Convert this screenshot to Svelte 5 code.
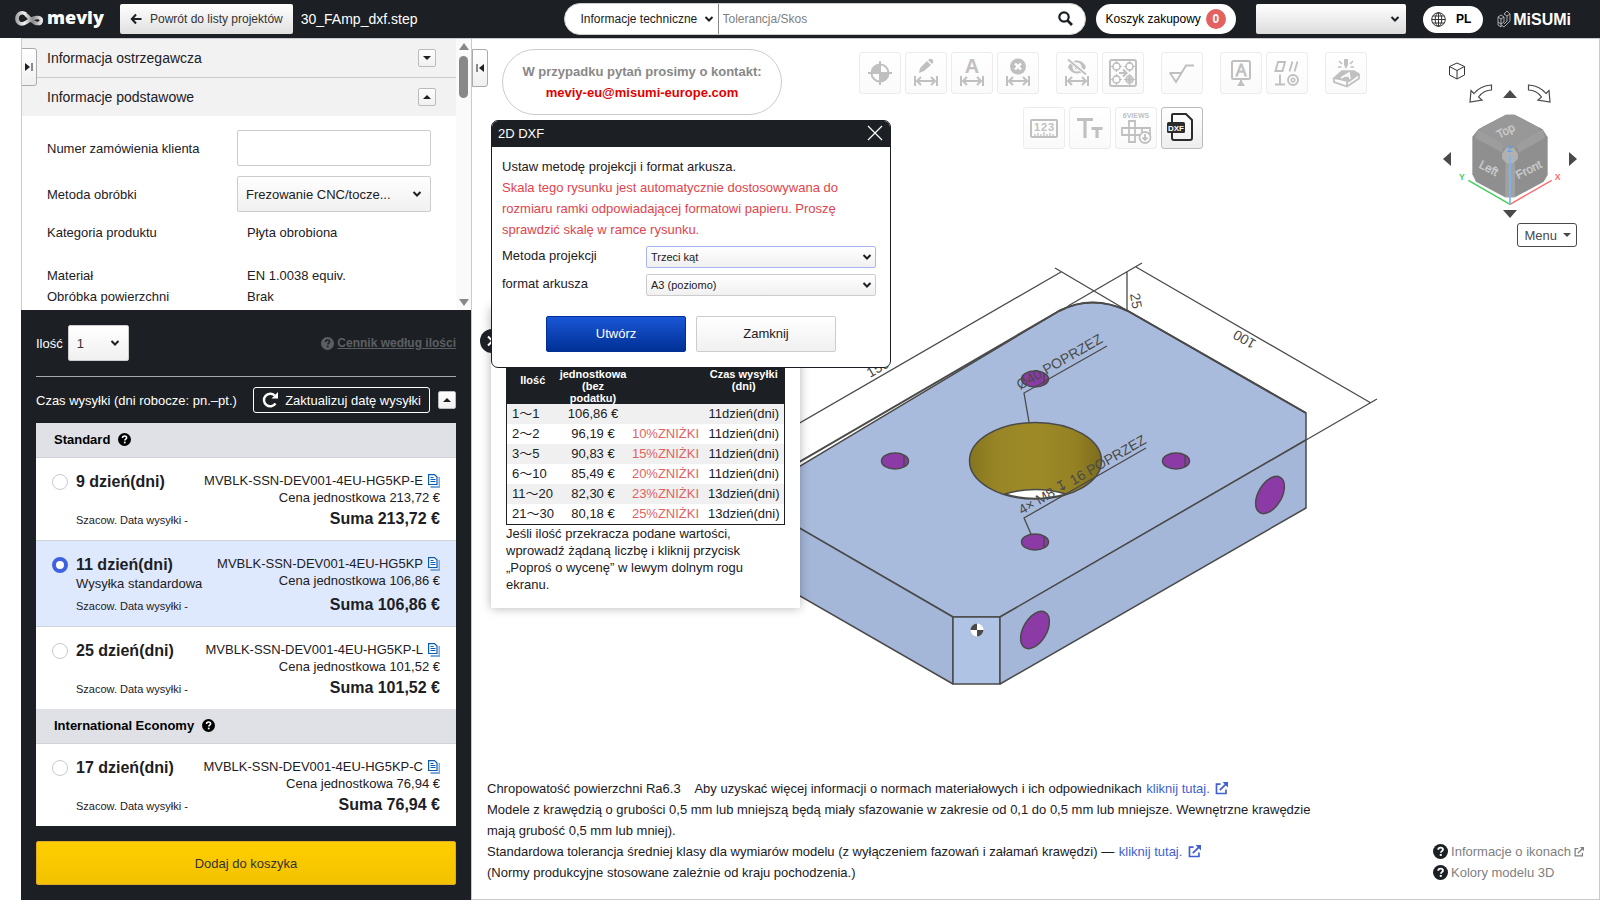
<script lang="ts">
  type Offer = {
    id: string;
    days: number;
    note?: string;
    code: string;
    unit: string;
    sum: string;
  };

  const groups: { name: string; offers: Offer[] }[] = [
    {
      name: 'Standard',
      offers: [
        { id: 'e', days: 9, code: 'MVBLK-SSN-DEV001-4EU-HG5KP-E', unit: '213,72', sum: '213,72' },
        { id: 's', days: 11, note: 'Wysyłka standardowa', code: 'MVBLK-SSN-DEV001-4EU-HG5KP', unit: '106,86', sum: '106,86' },
        { id: 'l', days: 25, code: 'MVBLK-SSN-DEV001-4EU-HG5KP-L', unit: '101,52', sum: '101,52' }
      ]
    },
    {
      name: 'International Economy',
      offers: [
        { id: 'c', days: 17, code: 'MVBLK-SSN-DEV001-4EU-HG5KP-C', unit: '76,94', sum: '76,94' }
      ]
    }
  ];

  const prices = [
    { range: '1〜1', price: '106,86 €', discount: '', days: '11dzień(dni)' },
    { range: '2〜2', price: '96,19 €', discount: '10%ZNIŻKI', days: '11dzień(dni)' },
    { range: '3〜5', price: '90,83 €', discount: '15%ZNIŻKI', days: '11dzień(dni)' },
    { range: '6〜10', price: '85,49 €', discount: '20%ZNIŻKI', days: '11dzień(dni)' },
    { range: '11〜20', price: '82,30 €', discount: '23%ZNIŻKI', days: '13dzień(dni)' },
    { range: '21〜30', price: '80,18 €', discount: '25%ZNIŻKI', days: '13dzień(dni)' }
  ];

  const toolGroups = [
    ['origin', 'dim-edit', 'dim-text', 'dim-delete'],
    ['dim-hide', 'holes'],
    ['roughness'],
    ['datum', 'tolerance'],
    ['engraving']
  ];

  const toolNames: Record<string, string> = {
    origin: 'Punkt bazowy',
    'dim-edit': 'Dodaj wymiar',
    'dim-text': 'Tekst wymiaru',
    'dim-delete': 'Usuń wymiar',
    'dim-hide': 'Ukryj wymiary',
    holes: 'Grupa otworów',
    roughness: 'Chropowatość',
    datum: 'Baza',
    tolerance: 'Tolerancje geometryczne',
    engraving: 'Grawerowanie',
    measure: 'Pomiar',
    font: 'Rozmiar tekstu',
    views: '6 widoków',
    dxf: '2D DXF'
  };

  let selected = 's';
  let dialogOpen = true;
  let orderNumber = '';
  let query = '';
</script>

{#snippet chevron()}
  <svg class="chevron" viewBox="0 0 10 10" width="10" height="10" aria-hidden="true">
    <path d="M1.500 3l3.500 3.500L8.500 3" fill="none" stroke="#1c2024" stroke-width="2" />
  </svg>
{/snippet}

{#snippet question(size: number, color: string, mark: string)}
  <svg viewBox="0 0 14 14" width={size} height={size} aria-hidden="true">
    <circle cx="7" cy="7" r="7" fill={color} />
    <path d="M4.900 5.400c0-1.300 1-2.100 2.200-2.100s2.200.8 2.200 1.900c0 1.400-2 1.500-2 3" fill="none" stroke={mark} stroke-width="1.700" />
    <rect x="6.300" y="9.300" width="1.900" height="1.800" fill={mark} />
  </svg>
{/snippet}

{#snippet external(size: number)}
  <svg viewBox="0 0 14 14" width={size} height={size} aria-hidden="true">
    <path d="M6 2.200H1.600v10.200h10.200V8" fill="none" stroke="currentColor" stroke-width="1.800" />
    <path d="M5.200 8.800L12 2" fill="none" stroke="currentColor" stroke-width="1.900" />
    <path d="M8.200 0H14v5.800z" fill="currentColor" />
  </svg>
{/snippet}

{#snippet dimension()}
  <path d="M10 24v10M32 24v10M12 29h18M16 25l-4 4 4 4M26 25l4 4-4 4" fill="none" stroke="currentColor" stroke-width="2" />
{/snippet}

{#snippet tool(name: string)}
  <button class="tool" class:active={name === 'dxf'} aria-label={toolNames[name]} on:click={() => name === 'dxf' && (dialogOpen = true)}>
    <svg viewBox="0 0 42 42" width="42" height="42" fill="none" stroke="none" stroke-width="2">
      {#if name === 'origin'}
        <circle cx="21" cy="21" r="8.5" stroke="currentColor" />
        <path d="M21 21v-9a9 9 0 0 0-9 9zM21 21v9a9 9 0 0 0 9-9z" fill="currentColor" />
        <path d="M21 9v24M9 21h24" stroke="currentColor" />
      {:else if name === 'dim-edit'}
        <path d="M14 21l1-5 7-7 4 4-7 6zM23 8l1.500-1a2.600 2.600 0 0 1 3.500 3.500L27 12z" fill="currentColor" />
        {@render dimension()}
      {:else if name === 'dim-text'}
        <text x="21" y="21" font-size="20" font-weight="700" text-anchor="middle" fill="currentColor">A</text>
        {@render dimension()}
      {:else if name === 'dim-delete'}
        <circle cx="21" cy="14.5" r="8" fill="currentColor" />
        <path d="M18 11.500l6 6M24 11.500l-6 6" stroke="#fff" stroke-width="2.4" />
        {@render dimension()}
      {:else if name === 'dim-hide'}
        <path d="M12 15c2-4.500 5.500-6.500 9-6.500s7 2 9 6.500c-2 4.500-5.500 6.500-9 6.500s-7-2-9-6.500z" fill="currentColor" />
        <circle cx="21" cy="15" r="4.5" fill="#fcfcfc" />
        <circle cx="21" cy="15" r="2.5" fill="currentColor" />
        <path d="M12 7l18 15" stroke="#fcfcfc" stroke-width="4" />
        <path d="M12 7.500l18 15" stroke="currentColor" stroke-width="1.8" />
        {@render dimension()}
      {:else if name === 'holes'}
        <rect x="8" y="8" width="26" height="26" rx="2" stroke="currentColor" />
        {#each [[14.5, 14.5], [27.5, 14.5], [14.5, 27.5], [27.5, 27.5]] as [x, y]}
          <circle cx={x} cy={y} r="3.6" stroke="currentColor" stroke-width="1.6" />
          <path d="M{x} {y - 5.5}v3M{x} {y + 2.5}v3M{x - 5.5} {y}h3M{x + 2.5} {y}h3" stroke="currentColor" stroke-width="1.2" />
        {/each}
        <circle cx="27.5" cy="27.5" r="2.5" fill="currentColor" />
        <path d="M17 21h7M21 17.500l3.500 3.500-3.500 3.500" stroke="currentColor" />
      {:else if name === 'roughness'}
        <path d="M8.500 21h12M9 21l6 9 10-16.500h8" stroke="currentColor" stroke-width="2" />
      {:else if name === 'datum'}
        <rect x="12" y="9" width="18" height="18" rx="1.5" stroke="currentColor" />
        <text x="21" y="24" font-size="16" text-anchor="middle" fill="currentColor" stroke="currentColor" stroke-width="0.8">A</text>
        <path d="M21 27v4" stroke="currentColor" />
        <path d="M17 34l4-6 4 6z" fill="currentColor" />
      {:else if name === 'tolerance'}
        <path d="M9.500 19l2.500-9h7l-2.500 9zM23.500 19.500l3-10M28.500 19.500l3-10M9 32.500h10M14 22.500v10" stroke="currentColor" stroke-width="1.9" />
        <circle cx="27" cy="28" r="5" stroke="currentColor" stroke-width="1.9" />
        <circle cx="27" cy="28" r="1.8" stroke="currentColor" stroke-width="1.5" />
      {:else if name === 'engraving'}
        <path d="M19 7h4v6l-2 4-2-4z" fill="currentColor" />
        <path d="M14 9l3 3M28 9l-3 3M13 15h3.500M29 15h-3.500" stroke="currentColor" stroke-width="1.6" />
        <path d="M9 26l8-7h12l5 3-10 7.500z" stroke="currentColor" stroke-width="1.6" fill="currentColor" />
        <path d="M9 26v4l13 4.500 12-8v-4M22 29.500v5" stroke="currentColor" stroke-width="1.8" />
        <path d="M16 26l8-5 1 6M19.500 24h5" stroke="#fff" stroke-width="1.5" />
      {:else if name === 'measure'}
        <rect x="8" y="13" width="26" height="17" rx="1" stroke="currentColor" />
        <text y="23.5" font-size="11" font-weight="700" text-anchor="middle" fill="currentColor">
          <tspan x="14">1</tspan><tspan x="21">2</tspan><tspan x="28">3</tspan>
        </text>
        <path d="M12 30v-3M15 30v-4M18 30v-3M21 30v-5M24 30v-3M27 30v-4M30 30v-3" stroke="currentColor" stroke-width="1.3" />
      {:else if name === 'font'}
        <path d="M8 12.500h16M16 12.500V31M22.500 21.500h11M28 21.500V31" stroke="currentColor" stroke-width="3.2" />
      {:else if name === 'views'}
        <text x="21" y="11" font-size="7" font-weight="700" text-anchor="middle" fill="currentColor">6VIEWS</text>
        <path d="M14 14h6v7h15v7H20v7h-6v-7H7v-7h7zM14 21h6v7h-6zM27 21v7" stroke="currentColor" stroke-width="1.8" />
        <circle cx="30" cy="30.5" r="5.5" fill="#fff" stroke="currentColor" stroke-width="1.8" />
        <path d="M30 27v6M27.500 30.500l2.500 2.500 2.500-2.500" stroke="currentColor" stroke-width="1.8" />
      {:else if name === 'dxf'}
        <path d="M12 7h13l6 6v18a2 2 0 0 1-2 2H13a2 2 0 0 1-2-2V8a1 1 0 0 1 1-1z" stroke="#2b2b2b" />
        <rect x="6" y="15" width="18" height="11" rx="1.5" fill="#2b2b2b" />
        <text x="15" y="23.5" font-size="8" font-weight="700" text-anchor="middle" fill="#fff">DXF</text>
      {/if}
    </svg>
  </button>
{/snippet}

<div class="app">
  <header class="topbar">
    <div class="left">
      <a class="logo" href="/" aria-label="meviy">
        <svg viewBox="0 0 30 18" width="30" height="18" aria-hidden="true">
          <defs>
            <linearGradient id="loop" x1="0" x2="1">
              <stop offset="0" stop-color="#aaa" />
              <stop offset="0.3" stop-color="#f4f4f4" />
              <stop offset="0.65" stop-color="#8a8a8a" />
              <stop offset="1" stop-color="#e4e4e4" />
            </linearGradient>
          </defs>
          <path d="M11 4C6 1 2 4 2 8.500S6 15.500 11 12.500 18 7 23 7.500s4 6.500-1 6-7-6.500-12-9.500" fill="none" stroke="url(#loop)" stroke-width="3.6" />
        </svg>
        <span>meviy</span>
      </a>
      <button class="back">
        <svg viewBox="0 0 12 12" width="12" height="12" aria-hidden="true">
          <path d="M6 1.500L1.800 6 6 10.500M2 6h9.500" fill="none" stroke="#1c2024" stroke-width="2" />
        </svg>
        Powrót do listy projektów
      </button>
      <span class="file">30_FAmp_dxf.step</span>
    </div>
    <form class="search" on:submit|preventDefault>
      <div class="select">
        <select aria-label="Zakres wyszukiwania">
          <option>Informacje techniczne</option>
        </select>
        {@render chevron()}
      </div>
      <input type="text" placeholder="Tolerancja/Skos" aria-label="Szukaj" bind:value={query} />
      <button aria-label="Szukaj">
        <svg viewBox="0 0 15 15" width="15" height="15" aria-hidden="true">
          <circle cx="6" cy="6" r="4.7" fill="none" stroke="#1c2024" stroke-width="2.2" />
          <path d="M9.500 9.500l4.500 4.500" stroke="#1c2024" stroke-width="2.6" />
        </svg>
      </button>
    </form>
    <a class="cart" href="/cart">Koszyk zakupowy <b>0</b></a>
    <div class="select account">
      <select aria-label="Konto"><option></option></select>
      {@render chevron()}
    </div>
    <button class="lang">
      <svg viewBox="0 0 15 15" width="15" height="15" fill="none" stroke="#333" aria-hidden="true">
        <circle cx="7.5" cy="7.5" r="6.8" />
        <ellipse cx="7.5" cy="7.5" rx="3.3" ry="6.8" />
        <path d="M.7 7.500h13.600M7.500.7v13.600M1.800 4h11.400M1.800 11h11.400" />
      </svg>
      PL
    </button>
    <a class="misumi" href="/misumi">
      <svg viewBox="0 0 14 18" width="14" height="18" fill="none" stroke="#ccc" stroke-width="0.8" aria-hidden="true">
        <path d="M1 7l3-2 3 2v5l-3 2-3-2zM1 7l3 2 3-2M4 9v8l-3-2v-3M7 4l3-3 3 3v7l-6 6-3-2M7 4l3 2 3-2M10 6v5l-3 3" />
      </svg>
      <span>MiSUMi</span>
    </a>
  </header>

  <div class="body">
    <aside>
      <section class="info">
        <button class="tab" aria-label="Zwiń panel">
          <svg viewBox="0 0 8 8" width="8" height="8"><path d="M0 0l5 4-5 4z" fill="#1c2024" /><path d="M7 0v8" stroke="#1c2024" /></svg>
        </button>
        <div class="info-main">
          <div class="accordion">
            <h2>Informacja ostrzegawcza</h2>
            <button class="toggle" aria-label="Rozwiń"><i class="down"></i></button>
          </div>
          <div class="accordion">
            <h2>Informacje podstawowe</h2>
            <button class="toggle" aria-label="Zwiń"><i class="up"></i></button>
          </div>
          <div class="fields">
            <div class="field">
              <label for="order-number">Numer zamówienia klienta</label>
              <input id="order-number" type="text" bind:value={orderNumber} />
            </div>
            <div class="field">
              <label for="method">Metoda obróbki</label>
              <div class="select method">
                <select id="method"><option>Frezowanie CNC/tocze...</option></select>
                {@render chevron()}
              </div>
            </div>
            <dl>
              <dt>Kategoria produktu</dt>
              <dd>Płyta obrobiona</dd>
            </dl>
            <dl class="material">
              <dt>Materiał</dt>
              <dd>EN 1.0038 equiv.</dd>
              <dt>Obróbka powierzchni</dt>
              <dd>Brak</dd>
            </dl>
          </div>
        </div>
        <div class="scrollbar" aria-hidden="true">
          <i class="up"></i>
          <span></span>
          <i class="down"></i>
        </div>
      </section>

      <section class="order">
        <div class="quantity">
          <label for="qty">Ilość</label>
          <div class="select qty">
            <select id="qty"><option>1</option></select>
            {@render chevron()}
          </div>
          <a href="/pricing">
            {@render question(13, '#5c5f62', '#1c2024')}
            <span>Cennik według ilości</span>
          </a>
        </div>
        <hr />
        <div class="shipping">
          <span>Czas wysyłki (dni robocze: pn.–pt.)</span>
          <button class="refresh">
            <svg viewBox="0 0 16 16" width="16" height="16" aria-hidden="true">
              <path d="M13.500 11.500A6.300 6.300 0 1 1 12.700 3.500" fill="none" stroke="#fff" stroke-width="2.4" />
              <path d="M16 0v6.500H9.500z" fill="#fff" />
            </svg>
            Zaktualizuj datę wysyłki
          </button>
          <button class="toggle" aria-label="Zwiń"><i class="up"></i></button>
        </div>
        <div class="offers">
          {#each groups as group}
            <h3>{group.name} {@render question(13, '#000', '#fff')}</h3>
            {#each group.offers as offer}
              <label class="offer" class:selected={selected === offer.id}>
                <input type="radio" name="offer" value={offer.id} bind:group={selected} />
                <span class="term">
                  <strong>{offer.days} dzień(dni)</strong>
                  {#if offer.note}<span>{offer.note}</span>{/if}
                  <small>Szacow. Data wysyłki -</small>
                </span>
                <span class="cost">
                  <span class="code">
                    {offer.code}
                    <svg viewBox="0 0 12 14" width="12" height="14" aria-hidden="true">
                      <path d="M2.500 13h9V3" fill="none" stroke="#7fa9d9" stroke-width="2" />
                      <path d="M.6.6h5.900l2.500 2.500v7.400H.6z" fill="#fff" stroke="#0a5cad" stroke-width="1.2" />
                      <path d="M2.500 3.500h3M2.500 5.500h5M2.500 7.500h5" stroke="#0a5cad" />
                    </svg>
                  </span>
                  <span>Cena jednostkowa {offer.unit} €</span>
                  <strong>Suma {offer.sum} €</strong>
                </span>
              </label>
            {/each}
          {/each}
        </div>
        <button class="add">Dodaj do koszyka</button>
      </section>
    </aside>

    <main>
      <!-- 3D model with dimension lines -->
      <svg class="model" viewBox="472 39 1127 860" aria-hidden="true">
        <defs>
          <linearGradient id="bore" x1="0" x2="1">
            <stop offset="0" stop-color="#85751f" />
            <stop offset="0.2" stop-color="#988526" />
            <stop offset="0.5" stop-color="#9d8a27" />
            <stop offset="0.8" stop-color="#948124" />
            <stop offset="1" stop-color="#7d6d1d" />
          </linearGradient>
        </defs>
        <g stroke="#4a4a4a" stroke-width="1.5" fill="none" stroke-linejoin="round">
          <path fill="#a9bbdc" d="M720 514L1059 311Q1092 294 1128 311L1306 413V440L1000 617H953L720 482z" />
          <path fill="#a5b7d9" d="M720 482L953 617V684L720 550z" />
          <path fill="#afc3e5" d="M953 617h47v67h-47z" />
          <path fill="#a5b7d8" d="M1000 617L1306 440V508L1000 684z" />
          <path stroke-width="2" d="M720 508L1059 311Q1092 294 1128 311L1306 413" />
          <ellipse cx="1035.5" cy="460.7" rx="66" ry="38.3" fill="url(#bore)" />
          <path fill="#fff" d="M1005 494Q1035 485 1066 494Q1035 503 1005 494z" />
          {#each [[895, 461], [1176, 461], [1035, 379], [1035, 542]] as [x, y]}
            <ellipse cx={x} cy={y} rx="13.5" ry="8" fill="#8b3aa6" />
            <path d="M{x + 9} {y - 6}v12" />
          {/each}
          <ellipse cx="1270" cy="495" rx="11.7" ry="20.4" fill="#8b3aa6" transform="rotate(30 1270 495)" />
          <ellipse cx="1035" cy="630" rx="11.7" ry="20.4" fill="#8b3aa6" transform="rotate(30 1035 630)" />
        </g>
        <g stroke="#4a4a4a" stroke-width="1.3" fill="none">
          <path d="M720 469L1061 272M1055 268L1128 311M1068 306L1142 263M1127 272V311M1136 267L1371 403M1306 440L1377 399" />
          <path d="M1029 422L1024 393 1107 346M1031 534L1024 518 1146 448" />
        </g>
        <g class="dims">
          <text transform="translate(870 378) rotate(-30)">150</text>
          <text transform="translate(1130 294) rotate(80)">25</text>
          <text transform="translate(1257 341) rotate(210)">100</text>
          <text transform="translate(1020 390) rotate(-30)">Ø40 POPRZEZ</text>
          <text transform="translate(1022 515) rotate(-30)">4× M8 ↧ 16 POPRZEZ</text>
        </g>
        <circle cx="977" cy="630" r="6.5" fill="#fff" />
        <path d="M977 630v-6.500a6.500 6.500 0 0 0-6.500 6.500zM977 630v6.500a6.500 6.500 0 0 0 6.500-6.500z" fill="#4a4a4a" />
      </svg>

      <div class="stage-top">
        <button class="tab" aria-label="Rozwiń panel">
          <svg viewBox="0 0 8 8" width="8" height="8"><path d="M8 0L3 4l5 4z" fill="#1c2024" /><path d="M1 0v8" stroke="#1c2024" /></svg>
        </button>
        <div class="contact">
          W przypadku pytań prosimy o kontakt:
          <a href="mailto:meviy-eu@misumi-europe.com">meviy-eu@misumi-europe.com</a>
        </div>
        <div class="tools">
          <div class="tool-row">
            {#each toolGroups as group}
              <div class="tool-group">
                {#each group as name}{@render tool(name)}{/each}
              </div>
            {/each}
          </div>
          <div class="tool-group">
            {#each ['measure', 'font', 'views', 'dxf'] as name}{@render tool(name)}{/each}
          </div>
        </div>
        <nav class="view-nav" aria-label="Widok">
          <button class="home" aria-label="Widok początkowy">
            <svg viewBox="0 0 18 18" width="18" height="18" fill="none" stroke="#333">
              <path d="M9 1l7.500 3.500v8.500L9 17l-7.500-4V4.500zM1.500 4.500L9 8.500l7.500-4M9 8.500V17" />
            </svg>
          </button>
          <div class="turn">
            <button aria-label="Obróć w lewo">
              <svg viewBox="0 0 24 20" width="24" height="20" fill="none" stroke="#4a4a4a" stroke-width="1.2">
                <path d="M1 18L2 6.500l3 3C9 4.500 15 1.500 22.500 1v5C17 6 12.500 9 9.500 13l3.500 3z" />
              </svg>
            </button>
            <button aria-label="Obróć w górę"><i class="tri n"></i></button>
            <button aria-label="Obróć w prawo">
              <svg viewBox="0 0 24 20" width="24" height="20" fill="none" stroke="#4a4a4a" stroke-width="1.2">
                <path d="M23 18L22 6.500l-3 3C15 4.500 9 1.500 1.500 1v5C7 6 11.500 9 14.500 13L11 16z" />
              </svg>
            </button>
          </div>
          <div class="cube-row">
            <button aria-label="Obróć w bok w lewo"><i class="tri w"></i></button>
            <svg viewBox="174 216 306 282" width="102" height="94" aria-hidden="true">
              <path fill="#8f8f8f" d="M315 224h26l84 44 15 24v113l-12 20-86 47h-30l-87-47-11-22V290l18-22z" />
              <path fill="#989898" d="M315 224h26l70 38 9 18-72 44h-42l-74-42 10-20z" />
              <path fill="#9d9d9d" d="M232 268l76 46-4 24-82-44zM425 268l-77 46 4 24 80-44z" />
              <path fill="#a1a1a1" d="M314 370h28v102h-30z" />
              <path fill="#b1b1b1" d="M315 324h24l12 18v14l-13 14h-22l-13-14v-14z" />
              <g class="cube-text">
                <text transform="translate(294 296) rotate(-27)">Top</text>
                <text transform="translate(232 382) rotate(27)">Left</text>
                <text transform="translate(352 418) rotate(-27)">Front</text>
              </g>
              <path d="M327 493L202 421" stroke="#3fce5b" stroke-width="4" />
              <path d="M327 493l125-72" stroke="#ff6b6b" stroke-width="4" />
              <path d="M327 493V345" stroke="#77b7f5" stroke-width="5" />
              <g class="axes">
                <text x="174" y="419" fill="#3fce5b">Y</text>
                <text x="461" y="421" fill="#ff6b6b">X</text>
                <text x="318" y="336" fill="#5aa5f0">Z</text>
              </g>
            </svg>
            <button aria-label="Obróć w bok w prawo"><i class="tri e"></i></button>
          </div>
          <button aria-label="Obróć w dół"><i class="tri s"></i></button>
          <button class="menu">Menu <i class="down"></i></button>
        </nav>
      </div>

      <div class="stage-bottom">
        <div class="notes">
          <p>Chropowatość powierzchni Ra6.3 &nbsp;&nbsp; Aby uzyskać więcej informacji o normach materiałowych i ich odpowiednikach <a href="/materials">kliknij tutaj. {@render external(13)}</a></p>
          <p>Modele z krawędzią o grubości 0,5 mm lub mniejszą będą miały sfazowanie w zakresie od 0,1 do 0,5 mm lub mniejsze. Wewnętrzne krawędzie mają grubość 0,5 mm lub mniej).</p>
          <p>Standardowa tolerancja średniej klasy dla wymiarów modelu (z wyłączeniem fazowań i załamań krawędzi) — <a href="/tolerances">kliknij tutaj. {@render external(13)}</a></p>
          <p>(Normy produkcyjne stosowane zależnie od kraju pochodzenia.)</p>
        </div>
        <div class="help">
          <a href="/icons">{@render question(15, '#1c2024', '#fff')} Informacje o ikonach {@render external(10)}</a>
          <a href="/colors">{@render question(15, '#1c2024', '#fff')} Kolory modelu 3D</a>
        </div>
      </div>

      <div class="price-panel">
        <button class="collapse" aria-label="Zwiń cennik">
          <svg viewBox="0 0 24 24" width="24" height="24"><circle cx="12" cy="12" r="12" fill="#1c2024" /><path d="M8 7.500l4.500 4.500L8 16.500" fill="none" stroke="#fff" stroke-width="2" /></svg>
        </button>
        <table>
          <thead>
            <tr>
              <th class="range">Ilość</th>
              <th class="price">Cena jednostkowa (bez podatku)</th>
              <th></th>
              <th class="days">Czas wysyłki (dni)</th>
            </tr>
          </thead>
          <tbody>
            {#each prices as row}
              <tr>
                <td class="range">{row.range}</td>
                <td>{row.price}</td>
                <td class="discount">{row.discount}</td>
                <td>{row.days}</td>
              </tr>
            {/each}
          </tbody>
        </table>
        <p>Jeśli ilość przekracza podane wartości, wprowadź żądaną liczbę i kliknij przycisk „Poproś o wycenę” w lewym dolnym rogu ekranu.</p>
      </div>

      {#if dialogOpen}
        <div class="dialog" role="dialog" aria-labelledby="dialog-title">
          <div class="dialog-head">
            <h2 id="dialog-title">2D DXF</h2>
            <button aria-label="Zamknij okno" on:click={() => (dialogOpen = false)}>
              <svg viewBox="0 0 16 16" width="16" height="16"><path d="M1 1l14 14M15 1L1 15" stroke="#fff" stroke-width="1.2" /></svg>
            </button>
          </div>
          <div class="dialog-body">
            <p>Ustaw metodę projekcji i format arkusza.</p>
            <p class="warn">Skala tego rysunku jest automatycznie dostosowywana do rozmiaru ramki odpowiadającej formatowi papieru. Proszę sprawdzić skalę w ramce rysunku.</p>
            <div class="option">
              <label for="projection">Metoda projekcji</label>
              <div class="select focus">
                <select id="projection"><option>Trzeci kąt</option></select>
                {@render chevron()}
              </div>
            </div>
            <div class="option">
              <label for="sheet">format arkusza</label>
              <div class="select">
                <select id="sheet"><option>A3 (poziomo)</option></select>
                {@render chevron()}
              </div>
            </div>
          </div>
          <div class="actions">
            <button class="primary">Utwórz</button>
            <button on:click={() => (dialogOpen = false)}>Zamknij</button>
          </div>
        </div>
      {/if}
    </main>
  </div>
</div>

<style>
  :global(body) {
    margin: 0;
  }

  .app {
    display: flex;
    flex-direction: column;
    height: 100vh;
    color: #1c2024;
    background: #fff;
    font: 13px/21px "Liberation Sans", Arial, "Noto Sans CJK JP", sans-serif;
  }

  .app *,
  .app *::before {
    box-sizing: border-box;
  }

  button,
  input,
  select {
    margin: 0;
    font: inherit;
    color: inherit;
  }

  button {
    padding: 0;
    border: 0;
    background: none;
    cursor: pointer;
  }

  svg {
    flex: none;
  }

  h2,
  h3,
  p,
  dl,
  dd {
    margin: 0;
  }

  a {
    color: inherit;
    text-decoration: none;
  }

  .select {
    position: relative;
    display: flex;
    border: 1px solid #ccc;
    border-radius: 2px;
    background: linear-gradient(#fff, #f0f0f0);
  }

  .select select {
    appearance: none;
    width: 100%;
    padding: 0 20px 0 8px;
    border: 0;
    outline: 0;
    background: none;
  }

  .chevron {
    position: absolute;
    top: calc(50% - 5px);
    right: 8px;
    pointer-events: none;
  }

  .up,
  .down {
    display: block;
    border: 4px solid transparent;
    border-top: 0;
    border-bottom: 4px solid #1c2024;
  }

  .down {
    border-top: 4px solid #1c2024;
    border-bottom: 0;
  }

  /* Top bar */

  .topbar {
    display: flex;
    align-items: center;
    height: 38px;
    padding: 0 29px 0 15px;
    background: #1c2024;
    font-size: 12px;
  }

  .left {
    display: flex;
    flex: 1;
    align-items: center;
  }

  .logo {
    display: flex;
    align-items: center;
    gap: 2px;
    width: 105px;
    color: #fff;
  }

  .logo span {
    margin-top: -4px;
    font: 800 18px/24px "Open Sans", sans-serif;
  }

  .back {
    display: flex;
    align-items: center;
    gap: 8px;
    height: 30px;
    padding: 0 10px;
    border-radius: 2px;
    background: linear-gradient(#fff, #e0e0e0);
    color: #333;
  }

  .file {
    margin-left: 8px;
    color: #fff;
    font-size: 14px;
  }

  .search {
    display: flex;
    align-items: center;
    width: 522px;
    height: 32px;
    padding-left: 8px;
    border: 1px solid #ccc;
    border-radius: 16px;
    background: #fff;
  }

  .search .select {
    width: 146px;
    height: 30px;
    border: 0;
    border-right: 1px solid #888;
    border-radius: 0;
    background: none;
  }

  .search .chevron {
    right: 4px;
  }

  .search input {
    flex: 1;
    min-width: 0;
    padding: 0 4px;
    border: 0;
    outline: 0;
    background: none;
  }

  .search input::placeholder {
    color: #808080;
  }

  .search button {
    display: flex;
    margin: 0 12px 2px 0;
  }

  .cart {
    display: flex;
    align-items: center;
    gap: 5px;
    height: 30px;
    margin: 0 20px 0 10px;
    padding: 0 10px;
    border-radius: 15px;
    background: #fff;
    color: #000;
  }

  .cart b {
    width: 20px;
    height: 20px;
    border-radius: 50%;
    background: #e26262;
    color: #fff;
    line-height: 20px;
    text-align: center;
  }

  .account {
    width: 150px;
    height: 30px;
    border: 0;
    background: linear-gradient(#fff, #dcdcdc);
  }

  .account .chevron {
    right: 6px;
  }

  .lang {
    display: flex;
    align-items: center;
    gap: 10px;
    height: 27px;
    margin: 0 14px 0 17px;
    padding: 0 12px 0 8px;
    border-radius: 14px;
    background: #fff;
    color: #000;
    font-weight: 700;
  }

  .misumi {
    display: flex;
    align-items: center;
    gap: 2px;
    color: #fff;
    font-size: 16px;
    font-weight: 700;
  }

  /* Left column */

  .body {
    display: flex;
    flex: 1;
    min-height: 0;
  }

  aside {
    display: flex;
    flex: none;
    flex-direction: column;
    width: 450px;
    margin-left: 21px;
  }

  .info {
    position: relative;
    display: flex;
    flex: 1;
    min-height: 0;
    overflow: hidden;
    border-top: 1px solid #c9c9cf;
    border-left: 1px solid #c9c9cf;
  }

  .info-main {
    flex: 1;
  }

  .tab {
    display: flex;
    align-items: center;
    justify-content: center;
    width: 16px;
    height: 38px;
    border: 1px solid #aaa;
    border-radius: 0 3px 3px 0;
    background: linear-gradient(#fff, #f0f0f0);
  }

  .info .tab {
    position: absolute;
    top: 9px;
    left: -1px;
  }

  .accordion {
    display: flex;
    align-items: center;
    justify-content: space-between;
    height: 38px;
    padding: 0 20px 0 25px;
    background: #f2f2f2;
  }

  .accordion + .accordion {
    height: 39px;
    border-top: 1px solid #ccc;
  }

  .accordion h2 {
    font-size: 14px;
    font-weight: 400;
  }

  .toggle {
    display: flex;
    align-items: center;
    justify-content: center;
    width: 18px;
    height: 18px;
    border: 1px solid #bbb;
    border-radius: 2px;
    background: linear-gradient(#fff, #f0f0f0);
  }

  .fields {
    padding: 14px 25px 0 25px;
  }

  .field {
    display: grid;
    grid-template-columns: 1fr 194px;
    align-items: center;
    margin-bottom: 10px;
  }

  .field input {
    height: 36px;
    padding: 0 8px;
    border: 1px solid #ccc;
    border-radius: 2px;
  }

  .method {
    height: 36px;
  }

  dl {
    display: grid;
    grid-template-columns: 1fr 184px;
    margin-bottom: 22px;
  }

  .scrollbar {
    display: flex;
    flex-direction: column;
    align-items: center;
    width: 15px;
    padding: 4px 0;
    background: #fafafa;
  }

  .scrollbar i {
    border-width: 0 5px 7px;
    border-bottom-color: #888;
  }

  .scrollbar i.down {
    margin-top: auto;
    border-width: 7px 5px 0;
    border-top-color: #888;
  }

  .scrollbar span {
    width: 9px;
    height: 42px;
    margin-top: 6px;
    border-radius: 5px;
    background: #888;
  }

  .order {
    padding: 15px;
    background: #1c2024;
  }

  .quantity {
    display: flex;
    align-items: center;
    gap: 5px;
    color: #fff;
  }

  .qty {
    width: 61px;
    height: 36px;
    color: #333;
  }

  .quantity a {
    display: flex;
    align-items: center;
    gap: 3px;
    margin-left: auto;
    color: #5c5f62;
    font-size: 12px;
    font-weight: 700;
    text-decoration: underline;
  }

  hr {
    height: 1px;
    margin: 15px 0 10px;
    border: 0;
    background: #aaa;
  }

  .shipping {
    display: flex;
    align-items: center;
    gap: 8px;
    color: #fff;
  }

  .refresh {
    display: flex;
    align-items: center;
    gap: 7px;
    height: 26px;
    margin-left: auto;
    padding: 0 8px;
    border: 1px solid #fff;
    border-radius: 3px;
  }

  .offers {
    margin-top: 10px;
    background: #fff;
  }

  h3 {
    display: flex;
    align-items: center;
    gap: 8px;
    height: 35px;
    padding: 0 18px 2px;
    border-bottom: 1px solid #d0d3d8;
    background: #dfe1e6;
    color: #000;
    font-size: 13px;
  }

  .offer {
    display: flex;
    min-height: 82px;
    padding: 14px 16px 11px;
    line-height: 17px;
  }

  .offer + .offer {
    min-height: 83px;
    border-top: 1px solid #d0d3d8;
  }

  .offer.selected {
    background: #dfe9fe;
  }

  .offer input {
    appearance: none;
    width: 16px;
    height: 16px;
    margin: 2px 8px 0 0;
    border: 1px solid #c8cacd;
    border-radius: 50%;
    background: #fff;
  }

  .offer input:checked {
    border: 4px solid #3f63e0;
  }

  .term,
  .cost {
    display: flex;
    flex-direction: column;
  }

  .term strong,
  .cost strong {
    font-size: 16px;
    line-height: 20px;
  }

  .term small {
    margin-top: auto;
    padding-top: 6px;
    font-size: 11px;
  }

  .cost {
    margin-left: auto;
    text-align: right;
  }

  .cost strong {
    margin-top: auto;
  }

  .code {
    display: flex;
    align-items: center;
    justify-content: flex-end;
    gap: 5px;
  }

  .add {
    display: block;
    width: 100%;
    height: 44px;
    margin-top: 15px;
    border: 1px solid #e0a82a;
    border-radius: 2px;
    background: linear-gradient(#ffce00, #f2c200);
    color: #333;
  }

  /* Model view */

  main {
    position: relative;
    display: flex;
    flex: 1;
    flex-direction: column;
    justify-content: space-between;
    min-width: 0;
    border: 1px solid #c9c9cf;
  }

  .model {
    position: absolute;
    top: 0;
    left: 0;
    width: 100%;
    height: 100%;
  }

  .dims {
    fill: #4a4a4a;
    font-size: 14px;
  }

  .stage-top,
  .stage-bottom {
    position: relative;
    display: flex;
  }

  .stage-top .tab {
    margin-top: 10px;
  }

  .contact {
    width: 280px;
    height: 66px;
    margin: 10px 77px 0 14px;
    padding: 11px 0;
    border: 1px solid #ccc;
    border-radius: 33px;
    color: #888;
    font-weight: 700;
    text-align: center;
  }

  .contact a {
    display: block;
    color: #e00000;
  }

  .tools {
    display: flex;
    flex-direction: column;
    align-items: center;
    gap: 13px;
    padding-top: 13px;
  }

  .tool-row {
    display: flex;
    gap: 17px;
  }

  .tool-group {
    display: flex;
    gap: 4px;
  }

  .tool {
    display: flex;
    align-items: center;
    justify-content: center;
    width: 42px;
    height: 42px;
    border: 1px solid #ececec;
    border-radius: 3px;
    background: linear-gradient(#fff, #fafafa);
    color: #c0c0c0;
  }

  .tool.active {
    border-color: #bbb;
    background: linear-gradient(#fff, #eee);
  }

  .view-nav {
    display: flex;
    flex-direction: column;
    align-items: center;
    width: 134px;
    margin: 23px 22px 0 auto;
  }

  .view-nav button {
    display: flex;
    align-items: center;
    justify-content: center;
  }

  .view-nav .home {
    align-self: flex-start;
    margin-left: 5px;
  }

  .turn {
    display: flex;
    align-items: center;
    gap: 10px;
    margin: 4px 0 8px;
  }

  .cube-row {
    display: flex;
    align-items: center;
    justify-content: space-between;
    width: 100%;
    margin-bottom: 4px;
  }

  .cube-text {
    fill: #c4c4c4;
    stroke: #d8d8d8;
    font-size: 35px;
  }

  .axes {
    font-size: 26px;
    font-weight: 700;
  }

  .tri {
    border: 0 solid transparent;
  }

  .tri.n {
    border-width: 0 7px 8px;
    border-bottom-color: #4a4a4a;
  }

  .tri.s {
    border-width: 8px 7px 0;
    border-top-color: #4a4a4a;
  }

  .tri.w {
    border-width: 7px 8px 7px 0;
    border-right-color: #4a4a4a;
  }

  .tri.e {
    border-width: 7px 0 7px 8px;
    border-left-color: #4a4a4a;
  }

  .view-nav .menu {
    align-self: flex-end;
    gap: 6px;
    height: 24px;
    margin-top: 5px;
    padding: 0 5px 0 6px;
    border: 1px solid #4a4a4a;
    border-radius: 3px;
    background: #fff;
    color: #4a4a4a;
  }

  .menu .down {
    border-top-color: #4a4a4a;
  }

  .stage-bottom {
    align-items: flex-end;
    justify-content: space-between;
    padding: 0 15px 16px;
  }

  .notes {
    width: 832px;
  }

  .notes a {
    margin-left: 1px;
    color: #3f5fd0;
  }

  .notes svg {
    margin-left: 2px;
    vertical-align: -2px;
  }

  .help a {
    display: flex;
    align-items: center;
    gap: 3px;
    color: #808080;
  }

  /* Price list */

  .price-panel {
    position: absolute;
    top: 269px;
    left: 19px;
    width: 309px;
    padding: 47px 15px 15px;
    background: #fff;
    box-shadow: 0 0 10px rgba(0, 0, 0, 0.3);
    line-height: 17px;
  }

  .collapse {
    position: absolute;
    top: 21px;
    left: -11px;
  }

  table {
    width: 100%;
    border: 1px solid #1c2024;
    border-collapse: collapse;
    table-layout: fixed;
  }

  th {
    padding: 0;
    background: #1c2024;
    color: #fff;
    font-size: 11px;
    line-height: 12px;
  }

  th.range {
    width: 52px;
  }

  th.price {
    width: 69px;
  }

  th.days {
    width: 81px;
  }

  td {
    height: 20px;
    padding: 0;
    line-height: 20px;
    text-align: center;
    white-space: nowrap;
  }

  tbody tr:nth-child(odd) {
    background: #f0f0f0;
  }

  td.range {
    padding-left: 5px;
    text-align: left;
  }

  .discount {
    color: #e26262;
  }

  /* DXF dialog */

  .dialog {
    position: absolute;
    top: 81px;
    left: 19px;
    width: 400px;
    border: 1px solid #1c2024;
    border-radius: 7px;
    background: #fff;
    overflow: hidden;
  }

  .dialog-head {
    display: flex;
    align-items: center;
    justify-content: space-between;
    height: 26px;
    padding: 0 7px 2px 6px;
    background: #1c2024;
    color: #fff;
  }

  .dialog-head h2 {
    font-size: 13px;
    font-weight: 400;
  }

  .dialog-head button {
    display: flex;
  }

  .dialog-body {
    padding: 9px 14px 0 10px;
  }

  .warn {
    margin-bottom: 6px;
    color: #e2444c;
  }

  .option {
    display: flex;
    justify-content: space-between;
    margin-bottom: 6px;
  }

  .option label {
    line-height: 20px;
  }

  .option .select {
    width: 230px;
    height: 22px;
    font-size: 11px;
  }

  .option select {
    padding-left: 4px;
  }

  .option .chevron {
    right: 3px;
  }

  .option .focus {
    border-color: #a9b6f5;
  }

  .actions {
    display: flex;
    justify-content: center;
    gap: 10px;
    padding: 14px 0 15px;
  }

  .actions button {
    width: 140px;
    height: 36px;
    padding-bottom: 2px;
    border: 1px solid #ccc;
    border-radius: 2px;
    background: linear-gradient(#fff, #f0f0f0);
  }

  .actions .primary {
    border-color: #003095;
    background: linear-gradient(#1a56d6, #003095);
    color: #fff;
  }
</style>
